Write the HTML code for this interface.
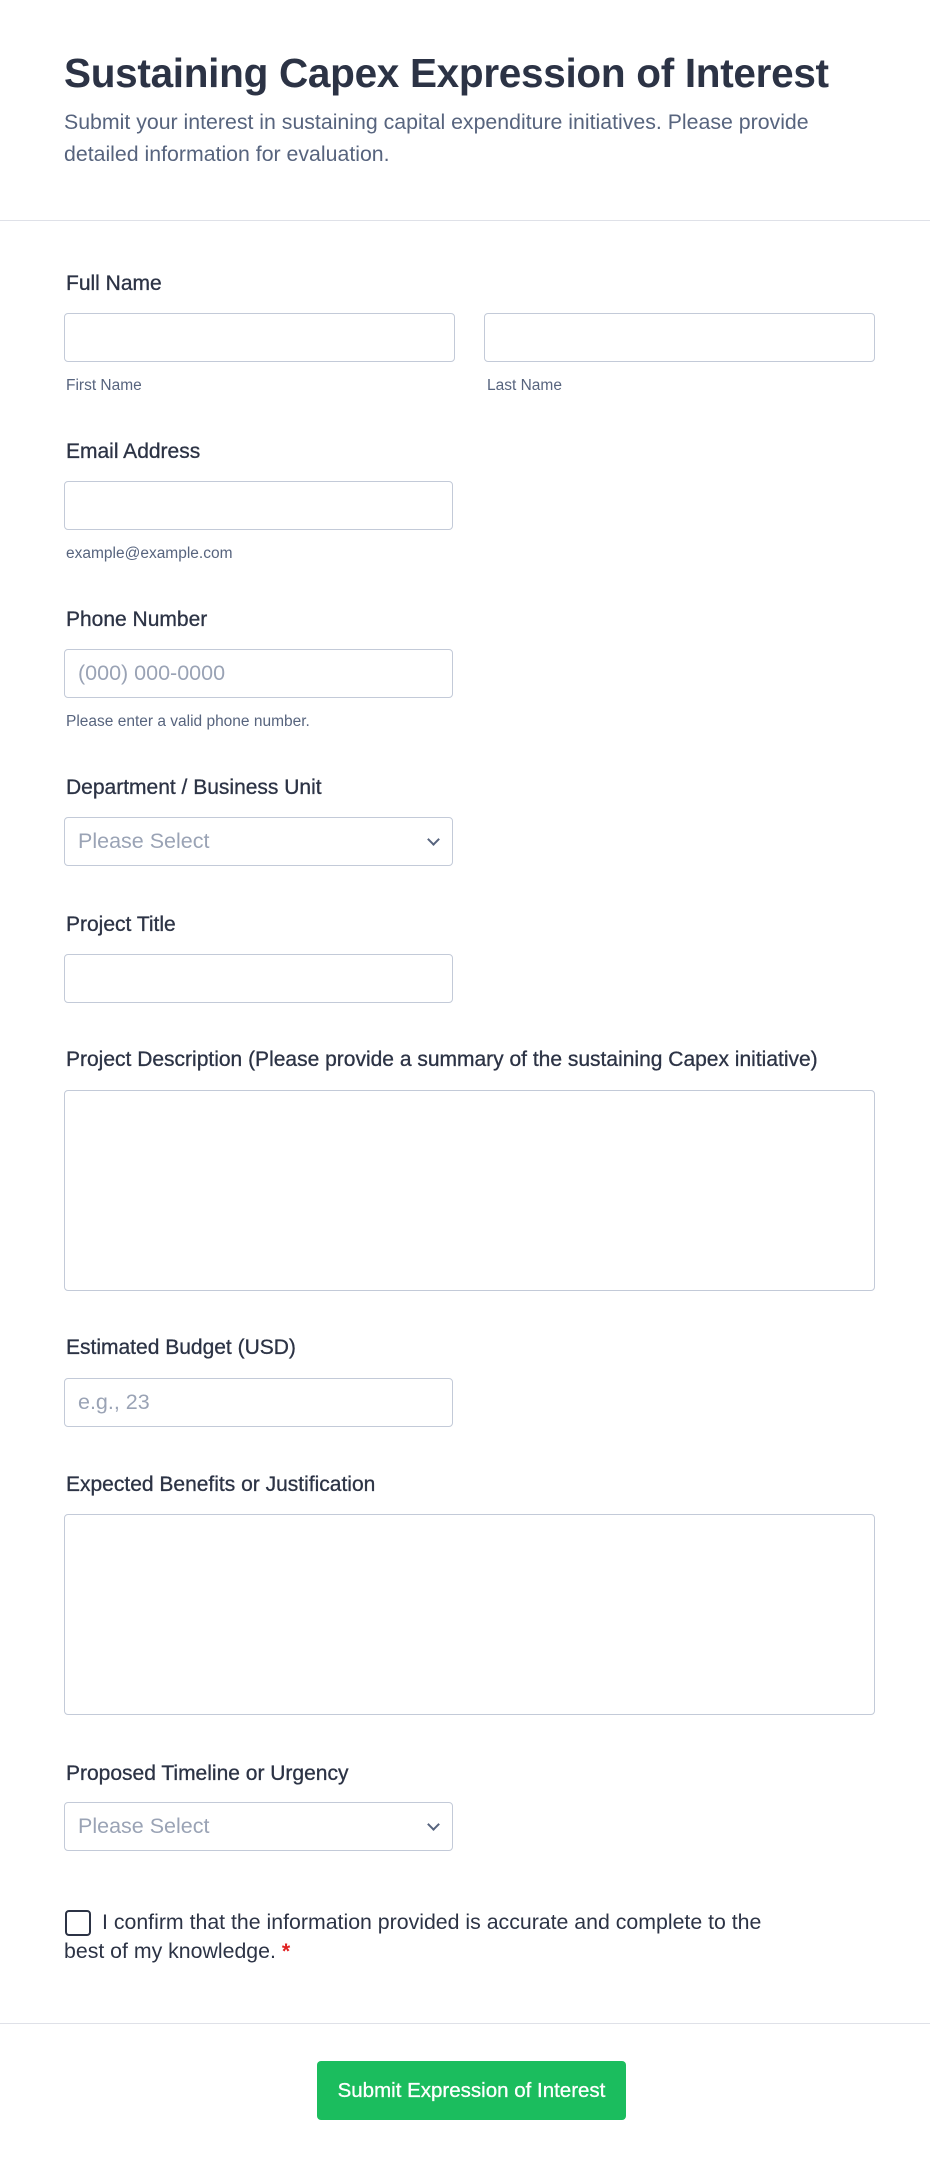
<!DOCTYPE html>
<html><head><meta charset="utf-8"><style>
*{box-sizing:border-box;margin:0;padding:0}
body{width:930px;height:2169px;background:#fff;font-family:"Liberation Sans",sans-serif;color:#2c3345;position:relative;overflow:hidden}
.a{position:absolute}
h1{position:absolute;left:64px;top:50px;font-size:40.5px;font-weight:bold;white-space:nowrap;color:#2c3345;letter-spacing:-0.3px}
.sub{left:64px;top:106px;width:860px;font-size:21.3px;line-height:32px;color:#57647e;white-space:nowrap}
.hr{left:0;width:930px;height:1px;background:#dfe1e8}
.lbl{left:66px;font-size:21px;color:#2c3345;white-space:nowrap;-webkit-text-stroke:0.3px #2c3345}
.in{border:1px solid #c3cad8;border-radius:4px;background:#fff}
.hint{font-size:15.5px;color:#57647e}
.ph{left:78px;font-size:21.5px;color:#9aa3b5}
.chev{position:absolute;right:14px;top:17px;width:9px;height:9px;border-right:2.5px solid #57647e;border-bottom:2.5px solid #57647e;transform:rotate(45deg)}
</style></head><body>
<h1>Sustaining Capex Expression of Interest</h1>
<div class="a sub">Submit your interest in sustaining capital expenditure initiatives. Please provide<br>detailed information for evaluation.</div>
<div class="a hr" style="top:220px"></div>

<div class="a lbl" style="top:272px">Full Name</div>
<div class="a in" style="left:64px;top:313px;width:391px;height:49px"></div>
<div class="a in" style="left:484px;top:313px;width:391px;height:49px"></div>
<div class="a hint" style="left:66px;top:377px">First Name</div>
<div class="a hint" style="left:487px;top:377px">Last Name</div>

<div class="a lbl" style="top:440px">Email Address</div>
<div class="a in" style="left:64px;top:481px;width:389px;height:49px"></div>
<div class="a hint" style="left:66px;top:545px">example@example.com</div>

<div class="a lbl" style="top:608px">Phone Number</div>
<div class="a in" style="left:64px;top:649px;width:389px;height:49px"></div>
<div class="a ph" style="top:661px">(000) 000-0000</div>
<div class="a hint" style="left:66px;top:713px">Please enter a valid phone number.</div>

<div class="a lbl" style="top:776px">Department / Business Unit</div>
<div class="a in" style="left:64px;top:817px;width:389px;height:49px"><div class="chev"></div></div>
<div class="a ph" style="top:829px">Please Select</div>

<div class="a lbl" style="top:913px">Project Title</div>
<div class="a in" style="left:64px;top:954px;width:389px;height:49px"></div>

<div class="a lbl" style="top:1048px">Project Description (Please provide a summary of the sustaining Capex initiative)</div>
<div class="a in" style="left:64px;top:1090px;width:811px;height:201px"></div>

<div class="a lbl" style="top:1336px">Estimated Budget (USD)</div>
<div class="a in" style="left:64px;top:1378px;width:389px;height:49px"></div>
<div class="a ph" style="top:1390px">e.g., 23</div>

<div class="a lbl" style="top:1473px">Expected Benefits or Justification</div>
<div class="a in" style="left:64px;top:1514px;width:811px;height:201px"></div>

<div class="a lbl" style="top:1762px">Proposed Timeline or Urgency</div>
<div class="a in" style="left:64px;top:1802px;width:389px;height:49px"><div class="chev"></div></div>
<div class="a ph" style="top:1814px">Please Select</div>

<div class="a" style="left:65px;top:1910px;width:26px;height:26px;border:2px solid #2c3345;border-radius:4px"></div>
<div class="a" style="left:64px;top:1908px;width:860px;font-size:21.3px;line-height:29px;color:#2c3345;white-space:nowrap"><span style="padding-left:38px">I confirm that the information provided is accurate and complete to the</span><br>best of my knowledge. <span style="color:#e02020;font-weight:bold">*</span></div>

<div class="a hr" style="top:2023px"></div>
<div class="a" style="left:317px;top:2061px;width:309px;height:59px;background:#1bbd5e;border-radius:4px;color:#fff;font-size:20.5px;text-align:center;line-height:59px;-webkit-text-stroke:0.3px #fff">Submit Expression of Interest</div>
</body></html>
